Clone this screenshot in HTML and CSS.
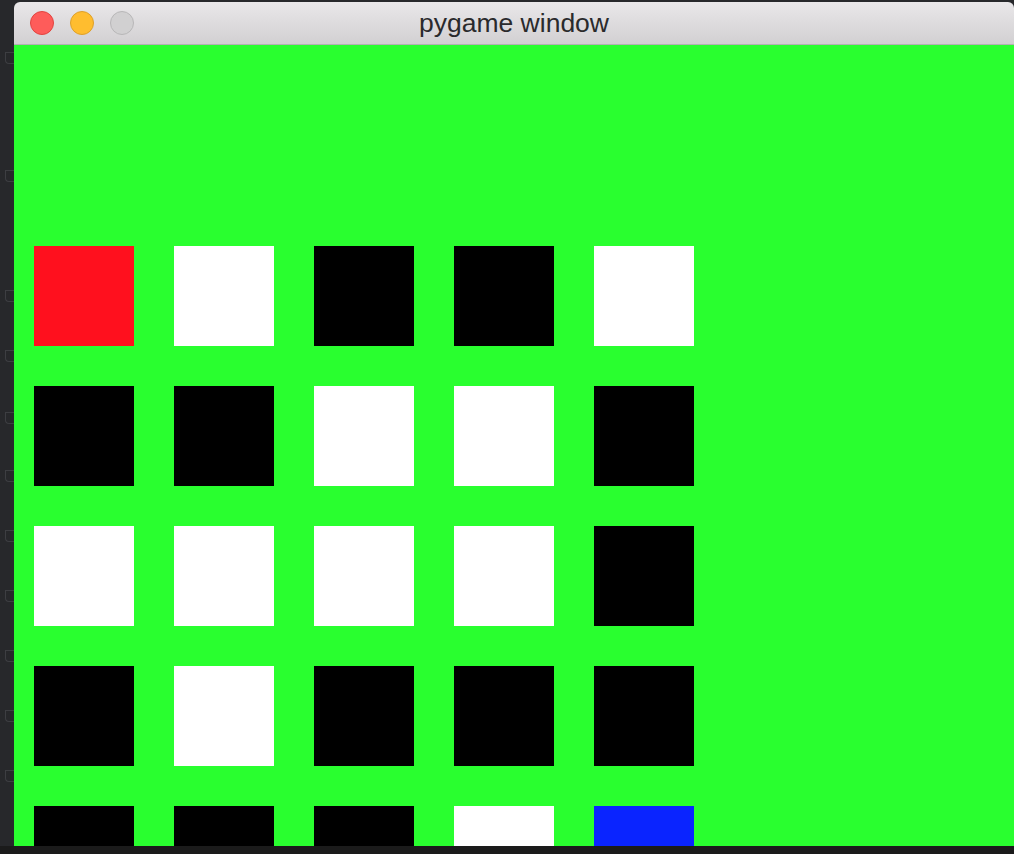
FILE: index.html
```html
<!DOCTYPE html>
<html>
<head>
<meta charset="utf-8">
<link rel="stylesheet" href="styles.css">
</head>
<body>
<div class="desk">
  <div class="gutter">
    <span class="mark m1"></span><span class="mark m2"></span><span class="mark m3"></span>
    <span class="mark m4"></span><span class="mark m5"></span><span class="mark m6"></span>
    <span class="mark m7"></span><span class="mark m8"></span><span class="mark m9"></span>
    <span class="mark m10"></span><span class="mark m11"></span>
  </div>
  <div class="window">
    <div class="titlebar">
      <div class="lights">
        <span class="light red"></span>
        <span class="light yellow"></span>
        <span class="light grey"></span>
      </div>
      <div class="title">pygame window</div>
    </div>
    <div class="canvas">
      <div class="grid">
        <div class="cell r"></div><div class="cell w"></div><div class="cell k"></div><div class="cell k"></div><div class="cell w"></div>
        <div class="cell k"></div><div class="cell k"></div><div class="cell w"></div><div class="cell w"></div><div class="cell k"></div>
        <div class="cell w"></div><div class="cell w"></div><div class="cell w"></div><div class="cell w"></div><div class="cell k"></div>
        <div class="cell k"></div><div class="cell w"></div><div class="cell k"></div><div class="cell k"></div><div class="cell k"></div>
        <div class="cell k"></div><div class="cell k"></div><div class="cell k"></div><div class="cell w"></div><div class="cell b"></div>
      </div>
    </div>
  </div>
</div>
<div class="bottom"></div>
</body>
</html>
```
FILE: styles.css
```css
html, body {
  margin: 0;
  padding: 0;
  width: 1014px;
  height: 854px;
  overflow: hidden;
  background: #27282b;
  font-family: "Liberation Sans", Arial, sans-serif;
}
.desk {
  display: flex;
  height: 846px;
}
.gutter {
  width: 14px;
  flex: none;
  position: relative;
  background: #27282b;
}
.mark {
  position: absolute;
  left: 5px;
  width: 8px;
  height: 10px;
  border: 1px solid #3d3e42;
  border-right: none;
  border-radius: 0 0 0 4px;
}
.m1 { top: 52px; }
.m2 { top: 170px; }
.m3 { top: 290px; }
.m4 { top: 350px; }
.m5 { top: 412px; }
.m6 { top: 470px; }
.m7 { top: 530px; }
.m8 { top: 590px; }
.m9 { top: 650px; }
.m10 { top: 710px; }
.m11 { top: 770px; }
.window {
  margin-top: 2px;
  width: 1000px;
  display: flex;
  flex-direction: column;
}
.titlebar {
  height: 42px;
  flex: none;
  position: relative;
  display: flex;
  align-items: center;
  justify-content: center;
  background: linear-gradient(#e9e7e9, #d2d0d2);
  border-bottom: 1px solid #b3b1b3;
  border-radius: 6px 6px 0 0;
}
.lights {
  position: absolute;
  left: 16px;
  top: 9px;
  display: flex;
  gap: 16px;
}
.light {
  width: 24px;
  height: 24px;
  border-radius: 50%;
  box-sizing: border-box;
}
.red { background: #fe5c5a; border: 1px solid #e2443f; }
.yellow { background: #ffbd2f; border: 1px solid #dea02a; }
.grey { background: #d1d0d1; border: 1px solid #b8b7b8; }
.title {
  font-size: 26.5px;
  color: #2a2a2c;
  padding-top: 1px;
}
.canvas {
  flex: 1;
  background: #29ff2f;
  overflow: hidden;
}
.grid {
  display: grid;
  grid-template-columns: repeat(5, 100px);
  grid-auto-rows: 100px;
  gap: 40px;
  padding: 201px 0 0 20px;
}
.cell.r { background: #ff101e; }
.cell.w { background: #ffffff; }
.cell.k { background: #000000; }
.cell.b { background: #0a24ff; }
.bottom {
  height: 8px;
  background: #1b1b1b;
}
```
